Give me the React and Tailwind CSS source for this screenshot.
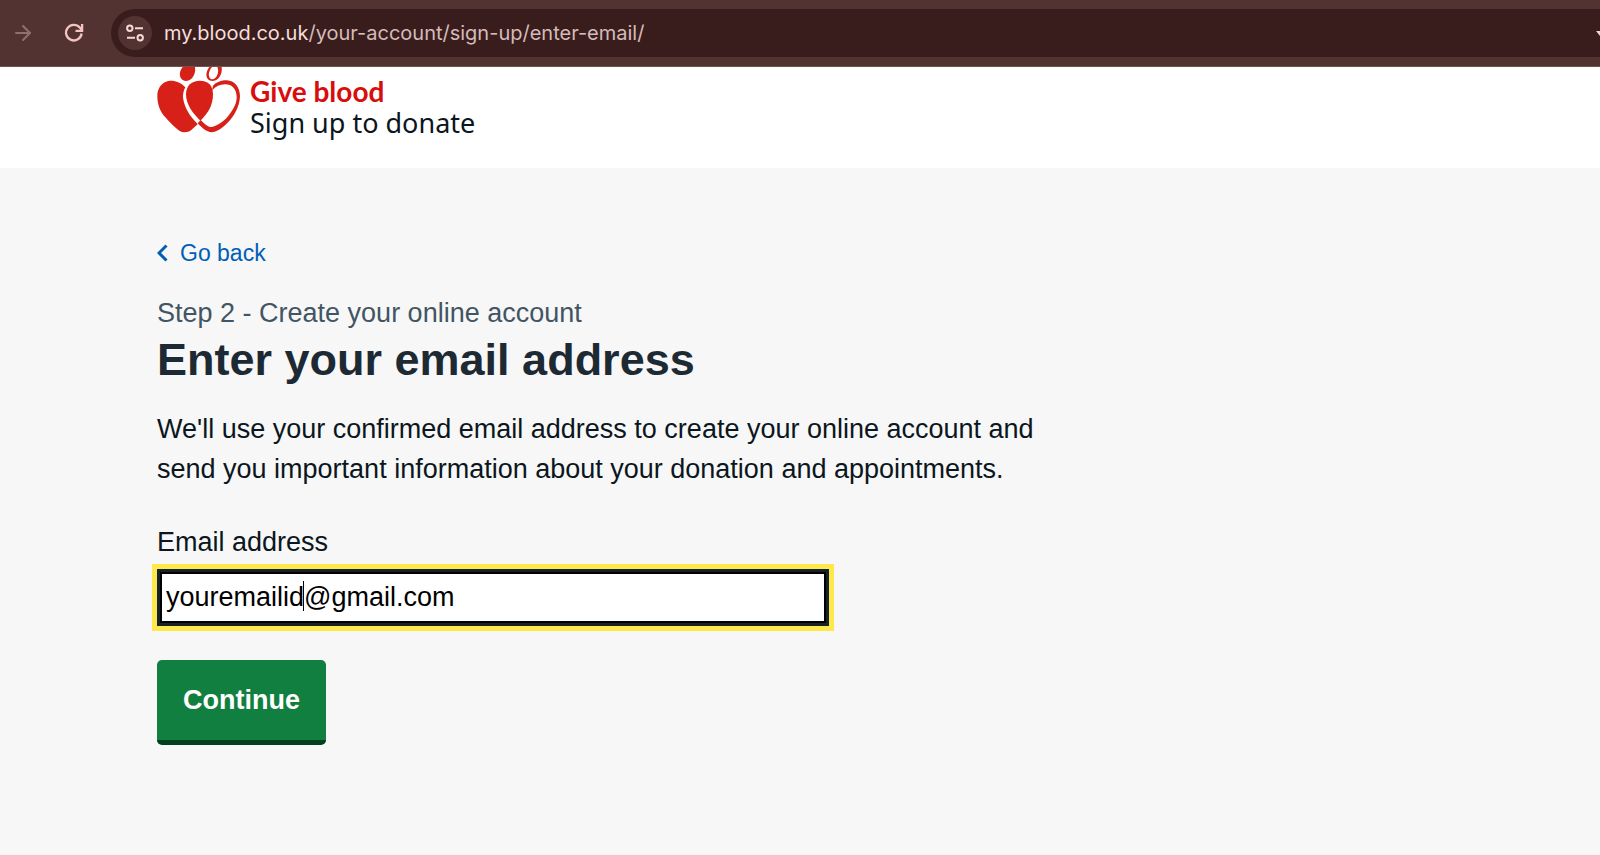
import { ArrowRight } from "lucide-react";

function ReloadIcon() {
  return (
    <svg width="20" height="20" viewBox="0 0 20 20" fill="none" stroke="currentColor" strokeWidth="2.3" aria-hidden="true">
      <path d="M17.6 10.5A7.8 7.8 0 1 1 15.8 4.6L17.8 7" />
      <path d="M18.1 1v6.8h-6.6" />
    </svg>
  );
}

function TuneIcon() {
  return (
    <svg width="20" height="20" viewBox="0 0 20 20" fill="none" stroke="currentColor" strokeWidth="2" aria-hidden="true">
      <circle cx="4.8" cy="5.3" r="2.7" />
      <path d="M10 5.3h8M2 14.7h8" />
      <circle cx="15.2" cy="14.7" r="2.7" />
    </svg>
  );
}

function BloodLogo() {
  return (
    <svg width="84" height="66" viewBox="51 36 252 198" fill="#d72118" aria-hidden="true">
      <path d="M128 36C120 46 117 58 122 68C128 79 142 81 152 73C163 64 167 50 165 36Z" />
      <path fillRule="evenodd" d="M208 36C200 46 197 60 201 68C206 79 222 81 232 73C243 64 247 50 245 36ZM216 36C207 46 204 60 209 68C214 76 224 74 230 64C235 55 236 44 232 36Z" />
      <path d="M136 97C125 83 106 76 90 77C67 79 52 98 52 122C52 150 61 170 76 187C92 205 106 219 118 227C130 234 144 233 154 225C162 218 168 213 173 207C150 185 132 157 129 127C129 115 131 106 136 97Z" />
      <path d="M180 77C155 77 138 92 138 118C138 148 158 175 181 197C205 175 219 150 219 118C219 92 205 77 180 77Z" />
      <path d="M219 92C228 82 244 76 260 76C284 77 300 97 300 124C299 155 282 185 262 204C248 218 230 232 214 232C200 231 186 219 173 205L182 195C198 212 208 217 216 216C228 214 250 202 264 184C280 164 291 145 290 124C289 102 276 88 255 88C240 88 227 95 216 106Z" />
    </svg>
  );
}

export default function App() {
  return (
    <div className="min-h-screen overflow-x-hidden bg-[#f7f7f7] font-['Liberation_Sans',Arial,sans-serif] text-[#0b1620]">
      <div className="flex items-center border-b border-[#6b5452] bg-[#523331] py-[9px] pl-[11px]">
        <button type="button" aria-label="Forward" className="text-[#8d716f]">
          <ArrowRight size={24} strokeWidth={2} />
        </button>
        <button type="button" aria-label="Reload" className="ml-[29px] text-[#f3c4c0]">
          <ReloadIcon />
        </button>
        <div className="ml-[27px] flex h-12 flex-1 items-center rounded-l-full bg-[#391d1d] pl-[7px]">
          <button type="button" aria-label="View site information" className="flex size-[34px] items-center justify-center rounded-full bg-[#523331] text-[#f5d9d6]">
            <TuneIcon />
          </button>
          <p className="ml-3 flex-1 font-[Inter,sans-serif] text-[20px] leading-6 whitespace-nowrap text-[#d5bbb9]">
            <span className="text-[#f5dedc]">my.blood.co.uk</span>/your-account/sign-up/enter-email/
          </p>
          <svg width="4" height="5" viewBox="0 0 4 5" fill="#ecd6d4" aria-hidden="true">
            <path d="M0 0h4v5Z" />
          </svg>
        </div>
      </div>

      <header className="flex h-[101px] items-start gap-[9px] bg-white pl-[157px]">
        <BloodLogo />
        <div className="pt-[9px] text-[27px] leading-[31px]">
          <p className="font-[Lato,sans-serif] text-[28px] font-bold text-[#d80d0d]">Give blood</p>
          <p className="font-['Noto_Sans',sans-serif]">Sign up to donate</p>
        </div>
      </header>

      <main className="px-[157px] pt-[69px]">
        <a href="#back" className="inline-flex items-center gap-3 text-[23px] leading-8 text-[#005eb8]">
          <svg width="11" height="18" viewBox="0 0 11 18" fill="none" stroke="currentColor" strokeWidth="3" aria-hidden="true">
            <path d="M9.5 1.5L2 9l7.5 7.5" />
          </svg>
          Go back
        </a>
        <h1 className="mt-6">
          <span className="block text-[27px] leading-10 text-[#425563]">Step 2 - Create your online account</span>
          <span className="block text-[45px] leading-[54px] font-bold text-[#1d2a33]">Enter your email address</span>
        </h1>
        <p className="mt-[22px] max-w-[890px] text-[27px] leading-10">
          We'll use your confirmed email address to create your online account and send you important information about
          your donation and appointments.
        </p>
        <form className="mt-[33px]" onSubmit={(e) => e.preventDefault()}>
          <label htmlFor="email" className="block text-[27px] leading-10">Email address</label>
          <div className="relative mt-[7px] max-w-[672px]">
            <input
              id="email"
              type="email"
              defaultValue="youremailid@gmail.com"
              className="block h-[57px] w-full border-3 border-[#15212b] bg-white px-[6px] text-[27px] text-black ring-5 inset-ring-2 ring-[#ffe94a] inset-ring-black outline-none"
            />
            <span className="pointer-events-none absolute top-3 left-[146px] h-[30px] w-px bg-black" />
          </div>
          <button type="submit" className="mt-[34px] h-[85px] rounded-[5px] border-b-5 border-[#00401e] bg-[#117f3f] px-[26px] text-[27px] font-bold text-white">
            Continue
          </button>
        </form>
      </main>
    </div>
  );
}
